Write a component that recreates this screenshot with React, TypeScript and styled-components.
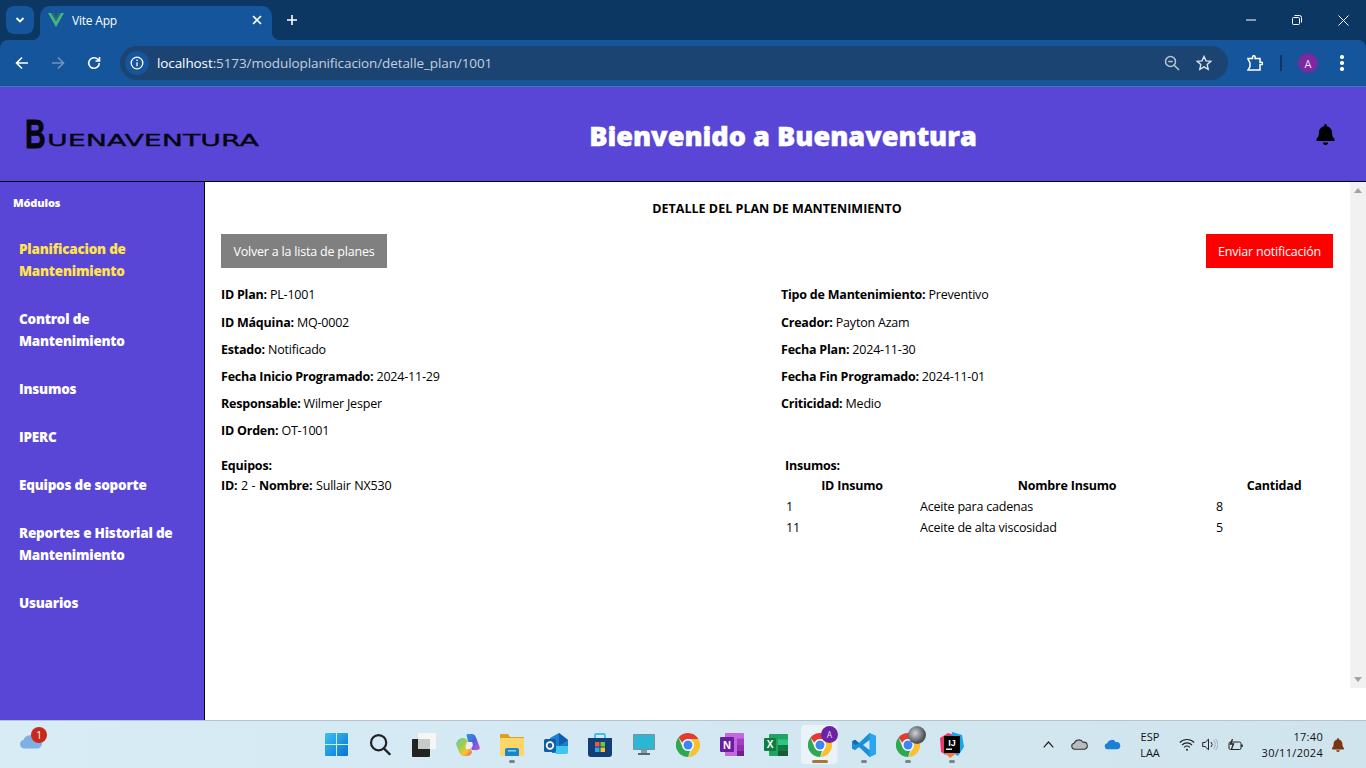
import React from 'react';
import styled, { createGlobalStyle } from 'styled-components';
import { FaBell } from 'react-icons/fa';

const FONT = `"Open Sans", "Noto Sans", "Liberation Sans", sans-serif`;

const Global = createGlobalStyle`
  html, body { margin: 0; padding: 0; height: 100%; overflow: hidden; background: #fff; }
  #root { height: 100%; }
  * { box-sizing: border-box; }
`;

const Page = styled.div`
  width: 1366px; height: 768px; display: flex; flex-direction: column; overflow: hidden;
  font-family: ${FONT}; color: #000;
`;

/* ---------- browser chrome ---------- */
const TabStrip = styled.div`
  height: 40px; flex: none; background: #0d3763; display: flex; align-items: flex-end; color: #fff;
`;
const TabSearch = styled.div`
  width: 28px; height: 28px; margin: 0 6px 6px 6px; border-radius: 8px; background: #14559b;
  display: flex; align-items: center; justify-content: center;
`;
const Tab = styled.div`
  position: relative; width: 232px; height: 34px; background: #14559b; border-radius: 10px 10px 0 0;
  display: flex; align-items: center; padding: 0 10px 6px 8px; font-size: 12px; letter-spacing: -0.2px;
  &::before, &::after { content: ''; position: absolute; bottom: 0; width: 8px; height: 8px; }
  &::before { left: -8px; background: radial-gradient(circle at 0 0, transparent 8px, #14559b 8.5px); }
  &::after { right: -8px; background: radial-gradient(circle at 100% 0, transparent 8px, #14559b 8.5px); }
`;
const TabTitle = styled.span`
  margin-left: 8px; flex: 1;
`;
const NewTab = styled.div`
  width: 24px; height: 24px; margin: 0 0 8px 8px; display: flex; align-items: center; justify-content: center;
`;
const WindowButtons = styled.div`
  margin-left: auto; height: 40px; display: flex;
`;
const WindowButton = styled.div`
  width: 46px; height: 40px; display: flex; align-items: center; justify-content: center;
`;
const Toolbar = styled.div`
  height: 47px; flex: none; background: #0d3763;
`;
const ToolbarInner = styled.div`
  height: 47px; background: #14559b; border-radius: 8px 8px 0 0; border-bottom: 1px solid #3f78ab;
  display: flex; align-items: center; padding-left: 8px; color: #fff;
`;
const NavButton = styled.div`
  width: 28px; height: 28px; margin-right: 8px; display: flex; align-items: center; justify-content: center; flex: none;
`;
const Omnibox = styled.div`
  width: 1108px; height: 34px; margin-left: 4px; border-radius: 17px; background: #1c4472; flex: none;
  display: flex; align-items: center; padding: 0 12px 0 5px;
`;
const InfoChip = styled.div`
  width: 24px; height: 24px; border-radius: 50%; background: #14559b; display: flex; align-items: center; justify-content: center; flex: none;
`;
const Url = styled.div`
  margin-left: 8px; font-size: 13.5px; letter-spacing: -0.1px; color: #c3d0de; flex: 1; white-space: nowrap;
  b { color: #fff; font-weight: 400; }
`;
const OmniIcon = styled.div`
  width: 24px; height: 24px; margin-left: 8px; display: flex; align-items: center; justify-content: center;
`;
const ToolbarRight = styled.div`
  display: flex; align-items: center; flex: 1; padding-left: 13px;
`;
const Divider = styled.div`
  width: 2px; height: 16px; background: #0d3763; margin: 0 16px 0 3px;
`;
const Avatar = styled.div`
  width: 20px; height: 20px; border-radius: 50%; background: #7a2a9e; color: #f2dcf7; font-size: 11px;
  display: flex; align-items: center; justify-content: center;
`;
const Kebab = styled.div`
  margin-left: 22px; width: 4px; display: flex; flex-direction: column; gap: 2.5px;
  i { display: block; width: 3.5px; height: 3.5px; border-radius: 50%; background: #fff; }
`;

/* ---------- app header ---------- */
const AppHeader = styled.header`
  height: 95px; flex: none; background: #5a46d6; border-bottom: 1px solid #000;
  display: flex; align-items: center; padding: 0 30px 0 24px;
`;
const LogoBox = styled.div`
  width: 240px; height: 50px; flex: none;
`;
const Welcome = styled.h1`
  margin: 0 13px 0 0; padding-top: 3px; font-size: 27.1px; font-weight: 800; color: #fff; flex: 1; white-space: nowrap;
  text-align: center; -webkit-text-stroke: 0.5px #fff;
`;
const BellBox = styled.div`
  flex: none; display: flex;
`;

/* ---------- body ---------- */
const Body = styled.div`
  flex: 1; display: flex; min-height: 0;
`;
const Sidebar = styled.aside`
  width: 205px; flex: none; background: #5a46d6; border-right: 1px solid #000; padding: 14px 0 0 0; color: #fff;
`;
const SideTitle = styled.div`
  font-size: 11px; font-weight: 800; padding-left: 13px; line-height: 14px; letter-spacing: -0.15px; margin-bottom: 14.7px;
`;
const SideItem = styled.div<{ $active?: boolean }>`
  padding: 13px 19px; font-size: 13.5px; font-weight: 800; line-height: 22px; letter-spacing: -0.22px;
  color: ${p => (p.$active ? '#ffe34f' : '#ffffff')};
`;
const Main = styled.main`
  flex: 1; min-width: 0; padding: 17px 17px 0 16px; background: #fff; font-size: 12.5px;
  letter-spacing: -0.2px;
`;
const ScrollColumn = styled.div`
  width: 16px; flex: none; background: #fff; display: flex; flex-direction: column;
`;
const Scrollbar = styled.div`
  flex: 1; background: #f1f1f1; display: flex; flex-direction: column; justify-content: space-between; align-items: center;
  padding: 6px 0; margin-bottom: 32px;
`;
const PageTitle = styled.h2`
  margin: 0 0 16px; text-align: center; font-size: 12.5px; font-weight: 700; line-height: 19px; letter-spacing: 0.02px;
`;
const ActionRow = styled.div`
  display: flex; justify-content: space-between; margin-bottom: 17.45px;
`;
const ActionButton = styled.div<{ $bg: string; $w: number }>`
  height: 34px; width: ${p => p.$w}px; background: ${p => p.$bg}; color: #fff; display: flex; align-items: center; justify-content: center;
`;
const FieldGrid = styled.div`
  display: grid; grid-template-columns: 552px 552px; column-gap: 8px; row-gap: 8.15px;
`;
const Field = styled.div`
  line-height: 19px; white-space: nowrap;
  strong { font-weight: 700; letter-spacing: -0.22px; }
`;
const Lower = styled.div`
  display: grid; grid-template-columns: 552px 552px; column-gap: 8px; margin-top: 15.8px;
`;
const Block = styled.div`
  line-height: 20px; word-spacing: 0.6px;
  strong { font-weight: 700; }
`;
const InsumosBlock = styled.div`
  padding-left: 4px; line-height: 20px;
  strong { font-weight: 700; }
`;
const Table = styled.table`
  border-collapse: collapse; width: 548px; table-layout: fixed; margin-top: -1px;
  th, td { padding: 0 0 0 1px; line-height: 21px; height: 21px; font-weight: 400; }
  th { font-weight: 700; text-align: center; padding: 0; }
`;

/* ---------- taskbar ---------- */
const Taskbar = styled.footer`
  height: 48px; flex: none; border-top: 1px solid #b5c4cc;
  background: linear-gradient(90deg, #d8ecf6 0%, #d3e8f2 50%, #cfe4ec 100%);
  display: flex; align-items: center; color: #111;
`;
const Widget = styled.div`
  position: relative; width: 314px; height: 47px; flex: none; padding: 11px 0 0 19px;
`;
const WidgetBadge = styled.div`
  position: absolute; left: 31px; top: 6px; width: 16px; height: 16px; border-radius: 50%; background: #c9281c;
  color: #fff; font-size: 10px; display: flex; align-items: center; justify-content: center;
`;
const Apps = styled.div`
  display: flex; flex: none; height: 47px;
`;
const AppSlot = styled.div<{ $active?: boolean }>`
  position: relative; width: 44px; height: 47px; display: flex; align-items: center; justify-content: center; flex: none;
  ${p => p.$active ? `&::before { content: ''; position: absolute; left: 3px; top: 4px; width: 35px; height: 39px; background: #e9f3f9; border-radius: 4px; box-shadow: 2px 0 0 #e4eff5; }` : ''}
  svg { position: relative; }
`;
const Running = styled.i<{ $active?: boolean }>`
  position: absolute; bottom: 5px; left: 50%; height: 3px; border-radius: 2px;
  width: ${p => (p.$active ? 16 : 6)}px; margin-left: ${p => (p.$active ? -8 : -3)}px;
  background: ${p => (p.$active ? '#a9763a' : '#7b8489')};
`;
const Tray = styled.div`
  margin-left: auto; display: flex; align-items: center; height: 47px; padding-right: 13px;
`;
const TrayIcon = styled.div<{ $w: number }>`
  width: ${p => p.$w}px; display: flex; justify-content: center; flex: none;
`;
const TwoLines = styled.div<{ $w: number; $right?: boolean }>`
  width: ${p => p.$w}px; font-size: 11px; line-height: 15.5px; flex: none;
  letter-spacing: ${p => (p.$right ? '0.3px' : '0')};
  text-align: ${p => (p.$right ? 'right' : 'center')};
`;
const BadgeA = styled.div`
  position: absolute; left: 23px; top: 5px; width: 17px; height: 17px; border-radius: 50%; background: #6c21a8; color: #e8d7f3; font-size: 8.5px;
  display: flex; align-items: center; justify-content: center;
`;
const BadgeGlobe = styled.div`
  position: absolute; left: 22px; top: 5px; width: 18px; height: 18px; border-radius: 50%;
  background: radial-gradient(circle at 40% 40%, #d0d4d8, #4a4e52 65%, #8a8e92);
`;

/* ---------- drawings ---------- */
const Logo = () => (
  <svg width="240" height="50" viewBox="0 0 240 50">
    <text transform="translate(1 39) scale(0.7 1)" fontFamily='"Liberation Sans", sans-serif' fontWeight="700" fontSize="41" fill="#06060f" stroke="#06060f" strokeWidth="0.8">B</text>
    <text x="23" y="37" fontFamily='"DejaVu Sans", sans-serif' fontSize="16.5" fontWeight="400" stroke="#06060f" strokeWidth="0.35" fill="#06060f" textLength="212" lengthAdjust="spacingAndGlyphs">UENAVENTURA</text>
  </svg>
);
const VueIcon = () => (
  <svg width="16" height="14" viewBox="0 0 16 14"><path d="M0 0h3.2L8 8.2 12.8 0H16L8 14z" fill="#42b883"/><path d="M3.2 0h2.6L8 3.8 10.2 0h2.6L8 8.2z" fill="#2f6a6a"/></svg>
);
const Chrome = ({ s = 24 }: { s?: number }) => (
  <svg width={s} height={s} viewBox="0 0 24 24">
    <path d="M12 0a12 12 0 0 1 10.4 6H12a6 6 0 0 0-5.6 3.8L2.5 4.6A12 12 0 0 1 12 0z" fill="#e33b2e"/>
    <path d="M22.4 6A12 12 0 0 1 12 24l5.2-9A6 6 0 0 0 17.2 9 6 6 0 0 0 12 6z" fill="#fbc02d"/>
    <path d="M12 24A12 12 0 0 1 2.5 4.6L6.8 15A6 6 0 0 0 12 18h2z" fill="#2fa84f"/>
    <circle cx="12" cy="12" r="5.8" fill="#fff"/><circle cx="12" cy="12" r="4.5" fill="#3f85f4"/>
  </svg>
);
const Win = () => (
  <svg width="23" height="23" viewBox="0 0 24 24">
    <defs><linearGradient id="w" x1="0" y1="0" x2="1" y2="1"><stop offset="0" stopColor="#38c3f3"/><stop offset="1" stopColor="#0a73d4"/></linearGradient></defs>
    <path d="M0 1a1 1 0 0 1 1-1h10.5v11.5H0zM12.5 0H23a1 1 0 0 1 1 1v10.5H12.5zM0 12.5h11.5V24H1a1 1 0 0 1-1-1zM12.5 12.5H24V23a1 1 0 0 1-1 1H12.5z" fill="url(#w)"/>
  </svg>
);
const Search = () => (
  <svg width="22" height="23" viewBox="0 0 24 24" fill="none" stroke="#222" strokeWidth="2.4" strokeLinecap="round"><circle cx="10.5" cy="10" r="8.3"/><path d="M16.5 16.5l6 6"/></svg>
);
const TaskView = () => (
  <svg width="24" height="24" viewBox="0 0 24 24"><rect x="6" y="0" width="18" height="16" rx="1" fill="#f6f6f6"/><rect x="0" y="6" width="18" height="18" rx="1" fill="#232323"/><rect x="6" y="6" width="12" height="10" fill="#c9c9c9"/></svg>
);
const Copilot = () => (
  <svg width="24" height="22" viewBox="0 0 24 22">
    <defs><linearGradient id="c1" x1="0" y1="0" x2="1" y2="1"><stop offset="0" stopColor="#1f9fe0"/><stop offset=".5" stopColor="#4f5fe0"/><stop offset="1" stopColor="#d84fd0"/></linearGradient>
    <linearGradient id="c2" x1="0" y1="0" x2="1" y2="1"><stop offset="0" stopColor="#5ec8c0"/><stop offset=".4" stopColor="#9ed04a"/><stop offset=".7" stopColor="#f8c438"/><stop offset="1" stopColor="#ef4a5a"/></linearGradient></defs>
    <path d="M11 0h5c3 0 4 3 5 6l3 8c-1 3-5 2-8 2l-4-9C11 3 10 1 11 0z" fill="url(#c1)"/>
    <path d="M7 4c3 0 4 2 5 4l4 10c-1 3-3 4-6 4H7C4 21 3 18 2 15L0 10C1 6 4 4 7 4z" fill="url(#c2)"/>
    <path d="M11 8h5c2 3 0 7-3 7h-3c-1-2 0-5 1-7z" fill="#f4e9f6"/>
  </svg>
);
const Folder = () => (
  <svg width="24" height="22" viewBox="0 0 24 22"><path d="M0 1a1 1 0 0 1 1-1h7l2 3h13a1 1 0 0 1 1 1v3H0z" fill="#d9a21a"/><rect y="4" width="24" height="18" rx="1" fill="#fcd666"/><path d="M5 16a2 2 0 0 1 2-2h10a2 2 0 0 1 2 2v6H5z" fill="#1a86cf"/><rect x="8" y="16" width="8" height="1.6" fill="#8ac9ee"/></svg>
);
const Outlook = () => (
  <svg width="24" height="24" viewBox="0 0 24 24"><path d="M6 5l9-5 9 7v11a2 2 0 0 1-2 2H8z" fill="#1d7dd1"/><path d="M15 0l9 7-9 6z" fill="#0d5fae"/><path d="M10 13h14v6a2 2 0 0 1-2 2H12z" fill="#3cc6f0"/><rect x="0" y="6" width="12" height="13" rx="1.5" fill="#0f5fa8"/><circle cx="6" cy="12.5" r="3.3" fill="none" stroke="#fff" strokeWidth="1.8"/></svg>
);
const Store = () => (
  <svg width="24" height="24" viewBox="0 0 24 24"><path d="M7 5V2a1 1 0 0 1 1-1h8a1 1 0 0 1 1 1v3" fill="none" stroke="#3cc0ee" strokeWidth="1.8"/><path d="M0 5h24v16a3 3 0 0 1-3 3H3a3 3 0 0 1-3-3z" fill="#123f78"/><rect x="7" y="9" width="4.5" height="4.5" fill="#ef5b3a"/><rect x="12.5" y="9" width="4.5" height="4.5" fill="#6fc83a"/><rect x="7" y="14.5" width="4.5" height="4.5" fill="#2aa7ee"/><rect x="12.5" y="14.5" width="4.5" height="4.5" fill="#fcc22a"/></svg>
);
const Monitor = () => (
  <svg width="22" height="22" viewBox="0 0 22 22"><rect width="22" height="16" rx="1" fill="#7e8f99"/><rect x="1" y="1" width="20" height="14" fill="#2bb6d3"/><path d="M8 16h6v3H8z" fill="#8b979e"/><rect x="5" y="19" width="12" height="2" fill="#5a666d"/></svg>
);
const OneNote = () => (
  <svg width="24" height="23" viewBox="0 0 24 23"><rect x="5" width="19" height="23" rx="1" fill="#c567e0"/><rect x="17" y="5.5" width="7" height="6" fill="#a43fc5"/><rect x="17" y="11.5" width="7" height="6" fill="#8f2fb0"/><rect x="17" y="17.5" width="7" height="5.5" fill="#701f8e"/><rect y="4" width="14" height="15" rx="1" fill="#6a1fa0"/><text x="7" y="15.5" fontFamily='"Liberation Sans"' fontSize="11" fontWeight="700" fill="#fff" textAnchor="middle">N</text></svg>
);
const Excel = () => (
  <svg width="24" height="22" viewBox="0 0 24 22"><rect x="5" width="19" height="22" rx="1" fill="#21a366"/><rect x="14" y="5.5" width="10" height="5.5" fill="#33c481"/><rect x="14" y="11" width="10" height="5.5" fill="#107c41"/><rect x="14" y="16.5" width="10" height="5.5" fill="#185c37"/><rect y="4" width="12" height="13" rx="1" fill="#107c41"/><text x="6" y="14" fontFamily='"Liberation Sans"' fontSize="10" fontWeight="700" fill="#fff" textAnchor="middle">X</text></svg>
);
const VSCode = () => (
  <svg width="24" height="24" viewBox="0 0 24 24"><path d="M17.5 0L24 3v18l-6.5 3L7 14l-4 3.2L0 15.5v-7L3 6.8 7 10z" fill="#1b8fdc"/><path d="M17.5 0L24 3v18l-6.5 3z" fill="#2aa5ee"/><path d="M17.5 7v10L11 12z" fill="#d3e8f2"/><path d="M0 8.5l3 -1.7L7 10l-3.5 2z" fill="#0f6db0"/></svg>
);
const IntelliJ = () => (
  <svg width="24" height="26" viewBox="0 0 24 26"><path d="M0 6l8-5 6 2-8 20-5-3z" fill="#f0366b"/><path d="M12 0l10 3 2 12-6 9-8-5z" fill="#14a6ee"/><path d="M18 20l-8 6-6-6 9-4z" fill="#f97a35"/><rect x="4" y="4" width="16" height="17" fill="#000"/><text x="12" y="13.5" fontFamily='"Liberation Sans"' fontSize="9" fontWeight="700" fill="#fff" textAnchor="middle">IJ</text><rect x="6" y="16.5" width="6" height="1.4" fill="#fff"/></svg>
);
const Cloud = ({ c = '#7fb0e4', w = 24, line }: { c?: string; w?: number; line?: string }) => (
  <svg width={w} height={w * 0.62} viewBox="0 0 24 15"><path d="M5 14.5a4.3 4.3 0 0 1-.6-8.5A7 7 0 0 1 17 4.6 5 5 0 0 1 19 14.5z" fill={c} stroke={line ?? 'none'} strokeWidth={line ? 1.5 : 0}/></svg>
);

const taskApps: { el: React.ReactNode; run?: boolean; active?: boolean }[] = [
  { el: <Win /> }, { el: <Search /> }, { el: <TaskView /> }, { el: <Copilot /> },
  { el: <Folder />, run: true }, { el: <Outlook /> }, { el: <Store /> }, { el: <Monitor /> },
  { el: <Chrome /> }, { el: <OneNote /> }, { el: <Excel /> },
  { el: <Chrome />, active: true, run: true }, { el: <VSCode />, run: true },
  { el: <Chrome />, run: true }, { el: <IntelliJ />, run: true },
];

export default function App() {
  return (
    <Page>
      <Global />
      <TabStrip>
        <TabSearch>
          <svg width="10" height="10" viewBox="0 0 10 10" fill="none" stroke="#fff" strokeWidth="1.8"><path d="M1.5 3l3.5 3.5L8.5 3"/></svg>
        </TabSearch>
        <Tab>
          <VueIcon />
          <TabTitle>Vite App</TabTitle>
          <svg width="10" height="10" viewBox="0 0 10 10" stroke="#fff" strokeWidth="1.6"><path d="M1 1l8 8M9 1l-8 8"/></svg>
        </Tab>
        <NewTab>
          <svg width="12" height="12" viewBox="0 0 12 12" stroke="#fff" strokeWidth="1.6"><path d="M6 1v10M1 6h10"/></svg>
        </NewTab>
        <WindowButtons>
          <WindowButton><svg width="10" height="2" viewBox="0 0 10 2" stroke="#fff"><path d="M0 1h10"/></svg></WindowButton>
          <WindowButton><svg width="10" height="10" viewBox="0 0 10 10" fill="none" stroke="#fff"><rect x=".5" y="2.5" width="7" height="7" rx="1"/><path d="M2.5 .5h5a2 2 0 0 1 2 2v5"/></svg></WindowButton>
          <WindowButton><svg width="11" height="11" viewBox="0 0 11 11" stroke="#fff"><path d="M.5.5l10 10M10.5.5l-10 10"/></svg></WindowButton>
        </WindowButtons>
      </TabStrip>
      <Toolbar>
        <ToolbarInner>
          <NavButton><svg width="14" height="14" viewBox="0 0 14 14" fill="none" stroke="#fff" strokeWidth="1.6"><path d="M13 7H1.5M7 1.5L1.5 7 7 12.5"/></svg></NavButton>
          <NavButton><svg width="14" height="14" viewBox="0 0 14 14" fill="none" stroke="#6f95bd" strokeWidth="1.6"><path d="M1 7h11.5M7 1.5L12.5 7 7 12.5"/></svg></NavButton>
          <NavButton><svg width="14" height="14" viewBox="0 0 14 14" fill="none" stroke="#fff" strokeWidth="1.6"><path d="M12.3 7a5.3 5.3 0 1 1-1.5-3.7L12.5 5M12.5 1v4h-4"/></svg></NavButton>
          <Omnibox>
            <InfoChip><svg width="14" height="14" viewBox="0 0 14 14" fill="none" stroke="#fff" strokeWidth="1.3"><circle cx="7" cy="7" r="5.8"/><path d="M7 6.2v4M7 3.6v1.4"/></svg></InfoChip>
            <Url><b>localhost</b>:5173/moduloplanificacion/detalle_plan/1001</Url>
            <OmniIcon><svg width="16" height="16" viewBox="0 0 16 16" fill="none" stroke="#b9c6d4" strokeWidth="1.5"><circle cx="6.5" cy="6.5" r="5"/><path d="M4.3 6.5h4.4M10.2 10.2L15 15"/></svg></OmniIcon>
            <OmniIcon><svg width="16" height="16" viewBox="0 0 16 16" fill="none" stroke="#dbe3ec" strokeWidth="1.4"><path d="M8 1.5l2 4.4 4.7.5-3.5 3.2 1 4.7L8 11.9l-4.2 2.4 1-4.7L1.3 6.4 6 5.9z"/></svg></OmniIcon>
          </Omnibox>
          <ToolbarRight>
            <NavButton>
              <svg width="16" height="16" viewBox="0 0 16 16" fill="none" stroke="#fff" strokeWidth="1.5"><path d="M1 3.5h4.5V2a1.2 1.2 0 0 1 2.6 0v1.5H13v3.7h1.5a1.2 1.2 0 0 1 0 2.4H13V15H2.2L1 15l2-3.5V8L1 4z"/></svg>
            </NavButton>
            <Divider />
            <Avatar>A</Avatar>
            <Kebab><i /><i /><i /></Kebab>
          </ToolbarRight>
        </ToolbarInner>
      </Toolbar>

      <AppHeader>
        <LogoBox><Logo /></LogoBox>
        <Welcome>Bienvenido a Buenaventura</Welcome>
        <BellBox><FaBell size={21} color="#000" /></BellBox>
      </AppHeader>

      <Body>
        <Sidebar>
          <SideTitle>Módulos</SideTitle>
          <SideItem $active>Planificacion de Mantenimiento</SideItem>
          <SideItem>Control de Mantenimiento</SideItem>
          <SideItem>Insumos</SideItem>
          <SideItem>IPERC</SideItem>
          <SideItem>Equipos de soporte</SideItem>
          <SideItem>Reportes e Historial de Mantenimiento</SideItem>
          <SideItem>Usuarios</SideItem>
        </Sidebar>
        <Main>
          <PageTitle>DETALLE DEL PLAN DE MANTENIMIENTO</PageTitle>
          <ActionRow>
            <ActionButton $bg="#808080" $w={166}>Volver a la lista de planes</ActionButton>
            <ActionButton $bg="#ff0000" $w={127}>Enviar notificación</ActionButton>
          </ActionRow>
          <FieldGrid>
            <Field><strong>ID Plan:</strong> PL-1001</Field>
            <Field><strong>Tipo de Mantenimiento:</strong> Preventivo</Field>
            <Field><strong>ID Máquina:</strong> MQ-0002</Field>
            <Field><strong>Creador:</strong> Payton Azam</Field>
            <Field><strong>Estado:</strong> Notificado</Field>
            <Field><strong>Fecha Plan:</strong> 2024-11-30</Field>
            <Field><strong>Fecha Inicio Programado:</strong> 2024-11-29</Field>
            <Field><strong>Fecha Fin Programado:</strong> 2024-11-01</Field>
            <Field><strong>Responsable:</strong> Wilmer Jesper</Field>
            <Field><strong>Criticidad:</strong> Medio</Field>
            <Field><strong>ID Orden:</strong> OT-1001</Field>
          </FieldGrid>
          <Lower>
            <Block>
              <strong>Equipos:</strong>
              <div><strong>ID:</strong> 2 - <strong>Nombre:</strong> Sullair NX530</div>
            </Block>
            <InsumosBlock>
              <strong>Insumos:</strong>
              <Table>
                <colgroup><col width="134" /><col width="296" /><col width="118" /></colgroup>
                <thead><tr><th>ID Insumo</th><th>Nombre Insumo</th><th>Cantidad</th></tr></thead>
                <tbody>
                  <tr><td>1</td><td>Aceite para cadenas</td><td>8</td></tr>
                  <tr><td>11</td><td>Aceite de alta viscosidad</td><td>5</td></tr>
                </tbody>
              </Table>
            </InsumosBlock>
          </Lower>
        </Main>
        <ScrollColumn>
          <Scrollbar>
            <svg width="8" height="5" viewBox="0 0 8 5"><path d="M4 0l4 5H0z" fill="#a3a3a3"/></svg>
            <svg width="8" height="5" viewBox="0 0 8 5"><path d="M0 0h8L4 5z" fill="#a3a3a3"/></svg>
          </Scrollbar>
        </ScrollColumn>
      </Body>

      <Taskbar>
        <Widget>
          <Cloud />
          <WidgetBadge>1</WidgetBadge>
        </Widget>
        <Apps>
          {taskApps.map((a, i) => (
            <AppSlot key={i} $active={a.active}>
              {a.el}
              {a.active && <BadgeA>A</BadgeA>}
              {i === 13 && <BadgeGlobe />}
              {a.run && <Running $active={a.active} />}
            </AppSlot>
          ))}
        </Apps>
        <Tray>
          <TrayIcon $w={22}><svg width="11" height="7" viewBox="0 0 11 7" fill="none" stroke="#222" strokeWidth="1.2"><path d="M.7 6.3L5.5 1l4.8 5.3"/></svg></TrayIcon>
          <TrayIcon $w={40}><Cloud c="#b9bcbe" w={17} line="#333" /></TrayIcon>
          <TrayIcon $w={26}><Cloud c="#1c7fd6" w={17} /></TrayIcon>
          <TwoLines $w={50}>ESP<br />LAA</TwoLines>
          <TrayIcon $w={24}><svg width="16" height="13" viewBox="0 0 16 13" fill="none" stroke="#222" strokeWidth="1.1"><path d="M.8 4.5a10 10 0 0 1 14.4 0M3 7a7 7 0 0 1 10 0M5.2 9.3a3.8 3.8 0 0 1 5.6 0"/><circle cx="8" cy="11.7" r="1" fill="#222" stroke="none"/></svg></TrayIcon>
          <TrayIcon $w={22}><svg width="16" height="13" viewBox="0 0 16 13" fill="none" stroke="#222" strokeWidth="1"><path d="M.7 4.5h2.4L6.5 1.2v10.6L3.1 8.5H.7z"/><path d="M9 4a3.5 3.5 0 0 1 0 5" /><path d="M11.5 2a6.5 6.5 0 0 1 0 9M13.6.8a8.5 8.5 0 0 1 0 11.4" stroke="#aab"/></svg></TrayIcon>
          <TrayIcon $w={30}><svg width="16" height="12" viewBox="0 0 16 12" fill="none" stroke="#222" strokeWidth="1"><rect x="1" y="3" width="12" height="7.5" rx="1.5"/><path d="M14 5.5v2.5" strokeWidth="1.5"/><path d="M4.5 0L2.5 5h3L3.5 10" strokeWidth="1.3"/></svg></TrayIcon>
          <TwoLines $w={72} $right>17:40<br />30/11/2024</TwoLines>
          <TrayIcon $w={30}><FaBell size={14} color="#7a3513" /></TrayIcon>
        </Tray>
      </Taskbar>
    </Page>
  );
}
